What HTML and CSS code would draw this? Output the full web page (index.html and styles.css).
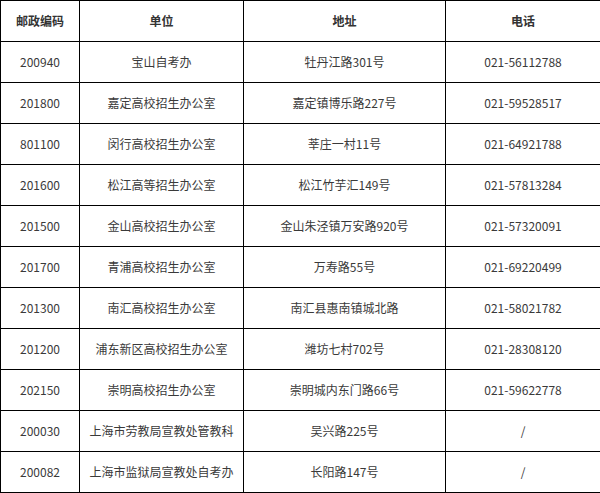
FILE: index.html
```html
<!DOCTYPE html>
<html lang="zh-CN">
<head>
<meta charset="utf-8">
<link rel="stylesheet" href="styles.css">
</head>
<body>
<table class="offices">
<colgroup>
<col class="c-code"><col class="c-unit"><col class="c-addr"><col class="c-tel">
</colgroup>
<thead>
<tr><th>邮政编码</th><th>单位</th><th>地址</th><th>电话</th></tr>
</thead>
<tbody>
<tr><td>200940</td><td>宝山自考办</td><td>牡丹江路301号</td><td>021-56112788</td></tr>
<tr><td>201800</td><td>嘉定高校招生办公室</td><td>嘉定镇博乐路227号</td><td>021-59528517</td></tr>
<tr><td>801100</td><td>闵行高校招生办公室</td><td>莘庄一村11号</td><td>021-64921788</td></tr>
<tr><td>201600</td><td>松江高等招生办公室</td><td>松江竹芋汇149号</td><td>021-57813284</td></tr>
<tr><td>201500</td><td>金山高校招生办公室</td><td>金山朱泾镇万安路920号</td><td>021-57320091</td></tr>
<tr><td>201700</td><td>青浦高校招生办公室</td><td>万寿路55号</td><td>021-69220499</td></tr>
<tr><td>201300</td><td>南汇高校招生办公室</td><td>南汇县惠南镇城北路</td><td>021-58021782</td></tr>
<tr><td>201200</td><td>浦东新区高校招生办公室</td><td>潍坊七村702号</td><td>021-28308120</td></tr>
<tr><td>202150</td><td>崇明高校招生办公室</td><td>崇明城内东门路66号</td><td>021-59622778</td></tr>
<tr><td>200030</td><td>上海市劳教局宣教处管教科</td><td>吴兴路225号</td><td>/</td></tr>
<tr><td>200082</td><td>上海市监狱局宣教处自考办</td><td>长阳路147号</td><td>/</td></tr>
</tbody>
</table>
</body>
</html>
```
FILE: styles.css
```css
html, body {
  margin: 0;
  padding: 0;
  background: #fff;
}
body {
  font-family: "Noto Sans CJK SC", "Noto Sans", sans-serif;
  font-size: 12px;
  color: #3a3a3a;
}
.offices {
  border-collapse: collapse;
  table-layout: fixed;
  width: 600px;
}
.c-code { width: 79px; }
.c-unit { width: 164px; }
.c-addr { width: 202px; }
.c-tel { width: 155px; }
.offices th,
.offices td {
  border: 1px solid #000;
  height: 40px;
  padding: 0;
  text-align: center;
  vertical-align: middle;
  line-height: 16px;
  white-space: nowrap;
}
.offices th {
  font-weight: bold;
  color: #333;
}
.offices td {
  font-weight: normal;
}
```
